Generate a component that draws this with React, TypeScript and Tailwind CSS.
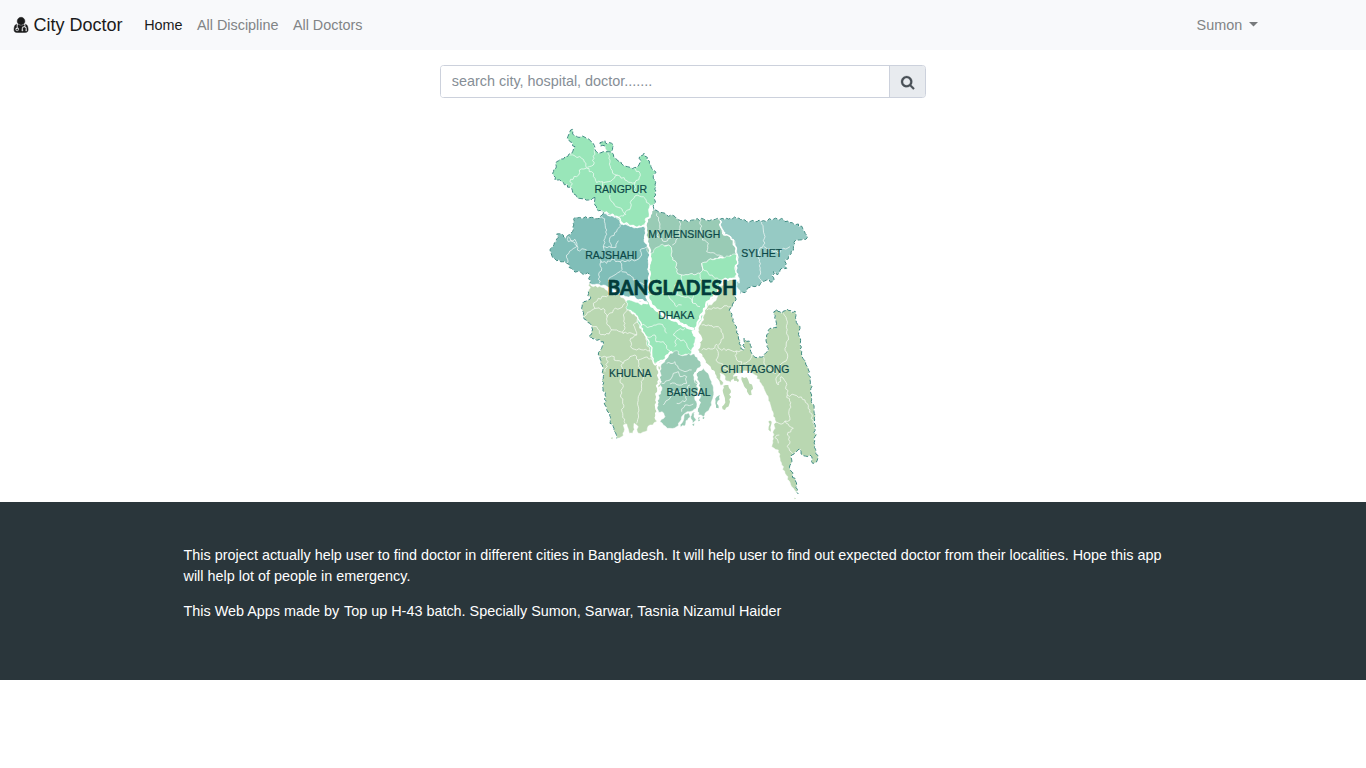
import React from "react";

type Shape = { at: [number, number]; fill?: string; pts: string };

const MINT = "#99e6b9";
const TEAL = "#80beb8";
const SAGE = "#99cbb5";
const AQUA = "#96cac4";
const OLIVE = "#b9d7b1";

const parse = (at: [number, number], pts: string) =>
  pts.split(" ").map((p) => {
    const [x, y] = p.split(",").map(Number);
    return [x + at[0], y + at[1]] as [number, number];
  });

const noise = (a: number, b: number) => {
  const s = Math.sin(a * 12.9898 + b * 78.233) * 43758.5453;
  return (s - Math.floor(s)) * 2 - 1;
};

// Adds small deterministic bends between points so that borders look surveyed.
const rough = (at: [number, number], pts: string, closed: boolean) => {
  const p = parse(at, pts);
  let d = `M${p[0][0]} ${p[0][1]}`;
  const n = closed ? p.length : p.length - 1;
  for (let i = 0; i < n; i++) {
    const a = p[i];
    const b = p[(i + 1) % p.length];
    // The bends are computed from the same end in both directions.
    const flip = a[0] > b[0] || (a[0] === b[0] && a[1] > b[1]);
    const [s, e] = flip ? [b, a] : [a, b];
    const dx = e[0] - s[0];
    const dy = e[1] - s[1];
    const len = Math.hypot(dx, dy);
    const steps = Math.max(1, Math.round(len / 6.5));
    const mid: string[] = [];
    for (let k = 1; k < steps; k++) {
      const t = k / steps;
      const o = noise(s[0] + k * 7, s[1] + k * 3) * 4;
      mid.push(`L${(s[0] + dx * t - (dy / len) * o).toFixed(1)} ${(s[1] + dy * t + (dx / len) * o).toFixed(1)}`);
    }
    if (flip) mid.reverse();
    d += mid.join("") + `L${b[0]} ${b[1]}`;
  }
  return closed ? d + "Z" : d;
};

const land: Shape[] = [
  { at: [480, 525], fill: OLIVE, pts: "110,-50 105,5 105,20 90,40 95,65 105,90 115,125 122,160 131,165 132,130 150,145 155,175 165,187 190,185 205,160 198,135 200,120 210,100 230,98 228,75 222,50 230,42 245,55 262,42 275,52 285,48 288,75 300,100 298,125 300,150 308,190 325,225 330,255 335,300 342,350 345,400 345,450 352,495 338,505 330,480 310,482 300,462 275,480 270,510 278,540 290,570 295,597 275,575 255,535 240,490 235,465 215,455 218,425 225,400 225,375 215,345 205,310 190,275 165,240 140,228 122,235 110,232 92,262 80,258 72,240 60,235 68,270 45,262 30,235 10,195 0,180 -15,150 -8,120 -5,100 5,80 15,55 20,40 50,10 70,-47" },
  { at: [90, 480], fill: OLIVE, pts: "60,10 70,20 95,22 120,42 150,45 168,65 172,90 200,105 205,130 225,165 230,190 240,210 245,235 258,250 270,260 268,290 272,310 262,340 258,370 258,400 260,425 240,435 225,455 205,460 200,435 192,430 188,460 178,460 170,432 160,435 162,455 155,470 140,475 130,440 120,430 120,400 105,375 105,345 98,320 100,290 98,260 85,225 95,205 100,185 75,175 58,172 68,150 60,130 40,110 35,85 42,65 60,58 55,35" },
  { at: [0, 240], fill: TEAL, pts: "105,52 125,55 155,52 180,55 190,40 205,42 230,50 240,68 262,76 290,82 312,80 316,98 312,118 325,140 330,165 325,190 330,215 328,240 320,260 318,285 325,305 300,305 280,290 262,290 230,275 205,262 190,255 150,250 148,222 125,220 100,210 80,190 50,182 35,165 30,148 42,135 48,125 55,112 50,102 65,102 75,115 85,105 98,95 102,75" },
  { at: [300, 240], fill: AQUA, pts: "240,58 260,55 290,55 320,65 345,65 370,62 400,58 430,58 450,68 475,72 490,90 502,112 490,118 465,122 460,145 448,165 435,185 440,205 420,210 412,225 400,215 398,245 380,240 362,250 345,260 330,262 315,278 300,280 290,260 298,235 285,215 292,185 290,150 282,120 255,105 245,85" },
  { at: [300, 240], fill: SAGE, pts: "40,30 55,35 80,45 105,50 130,62 160,60 190,57 220,60 240,60 245,80 250,100 270,108 285,125 287,145 290,165 260,170 225,175 205,180 185,190 188,205 180,220 150,222 125,225 110,215 110,190 98,180 95,150 85,135 65,135 45,155 35,170 20,150 22,110 15,85 20,60" },
  { at: [0, 0], fill: MINT, pts: "385,375 395,390 398,420 410,430 410,455 425,465 450,462 480,460 488,445 485,430 505,420 560,408 590,405 592,425 585,450 590,475 570,478 550,478 545,500 530,520 510,540 498,560 490,575 480,605 465,625 460,640 465,660 455,690 450,705 430,705 410,700 395,695 375,708 370,720 350,728 343,730 335,715 330,690 320,670 315,645 295,610 290,585 260,568 258,545 275,542 305,555 320,548 325,525 318,505 328,480 326,450 335,420 333,400 345,385 362,375" },
  { at: [0, 0], fill: MINT, pts: "92,30 98,28 98,42 120,52 135,52 155,65 165,90 175,100 190,95 205,95 218,100 225,115 245,132 270,142 292,142 300,128 300,108 312,100 322,112 328,130 335,145 348,158 340,175 345,195 347,225 340,260 330,255 328,290 315,300 315,318 285,320 260,312 240,305 230,288 205,280 175,272 165,255 165,232 145,240 120,235 100,222 95,205 65,185 45,180 38,160 48,145 50,125 75,110 95,100 105,80 90,65 82,55" },
  { at: [0, 0], fill: MINT, pts: "180,68 195,62 202,72 215,70 218,82 212,98 200,92 195,78 182,78" },
  { at: [90, 480], fill: SAGE, pts: "320,212 330,225 350,225 375,222 395,240 398,255 380,270 370,285 380,310 385,330 375,360 380,385 360,395 345,400 330,425 320,440 300,445 280,435 270,425 285,410 276,395 265,397 262,370 265,345 275,330 270,300 272,260 285,240 300,220" },
  { at: [300, 510], fill: SAGE, pts: "190,235 205,250 215,275 220,300 215,345 200,365 190,380 175,375 172,350 180,325 178,300 165,270 175,245" },
  { at: [300, 510], fill: SAGE, pts: "132,378 145,368 151,382 138,392 134,408 122,412" },
  { at: [300, 510], fill: SAGE, pts: "156,370 166,366 163,382 169,390 158,400 153,386" },
];

const islands: Shape[] = [
  { at: [480, 525], fill: OLIVE, pts: "70,272 85,270 92,285 90,320 75,345 68,343 75,315" },
  { at: [480, 525], fill: OLIVE, pts: "125,245 140,247 158,275 155,300 144,295 132,273" },
  { at: [480, 525], fill: OLIVE, pts: "100,245 112,243 114,262 103,258" },
  { at: [480, 525], fill: SAGE, pts: "50,305 60,300 53,318 56,340 48,338" },
  { at: [480, 525], fill: OLIVE, pts: "205,380 215,380 212,410 206,395" },
  { at: [300, 510], fill: SAGE, pts: "174,383 181,382 180,392 174,394" },
  { at: [300, 510], fill: SAGE, pts: "188,382 193,381 192,387 188,386" },
  { at: [300, 510], fill: SAGE, pts: "156,404 163,400 162,408" },
  { at: [480, 525], fill: OLIVE, pts: "283,608 288,610 284,613" },
  { at: [90, 480], fill: OLIVE, pts: "122,474 128,472 127,478" },
];

const districts: Shape[] = [
  { at: [0, 0], pts: "155,65 163,90 162,115 160,135 142,142" },
  { at: [0, 0], pts: "80,108 105,108 125,115 138,130 140,145 155,155 165,175 170,188 188,185 190,205" },
  { at: [0, 0], pts: "138,145 118,150 110,170 92,178 95,205" },
  { at: [0, 0], pts: "203,98 210,120 212,145 218,160 240,168 255,180 285,188 298,172 300,160 280,145" },
  { at: [0, 0], pts: "190,188 205,185 218,178 232,165" },
  { at: [0, 0], pts: "210,225 215,245 235,262 252,278 258,285" },
  { at: [0, 0], pts: "230,288 250,288 262,270 272,262 275,240 285,228 298,228 315,235 330,255" },
  { at: [0, 0], pts: "285,188 282,208 300,220" },
  { at: [0, 240], pts: "82,105 85,125 105,118 110,140 95,150 80,165 82,190" },
  { at: [0, 240], pts: "85,110 105,128 112,150 140,150" },
  { at: [0, 240], pts: "186,45 195,70 200,90 195,115 190,140" },
  { at: [0, 240], pts: "240,72 230,95 215,108 208,125 213,142 190,140 193,152" },
  { at: [0, 240], pts: "213,142 228,142 235,122" },
  { at: [0, 240], pts: "180,178 185,205 176,225 178,250" },
  { at: [0, 240], pts: "180,185 200,190 215,178 240,185 262,182 290,180 305,165 300,150 325,138" },
  { at: [0, 240], pts: "240,185 245,200 240,215 215,230 205,245" },
  { at: [0, 240], pts: "245,215 270,225 280,240 300,248 322,255" },
  { at: [300, 240], pts: "50,40 55,60 60,85 50,105 75,125 85,115 110,112" },
  { at: [300, 240], pts: "118,60 120,85 118,100 108,120 97,135" },
  { at: [300, 240], pts: "183,60 182,90 187,120 205,130 200,155 225,160 250,170" },
  { at: [300, 240], pts: "365,65 370,90 375,110 370,135 355,155 358,185 360,210 358,235 365,248" },
  { at: [300, 240], pts: "372,140 395,150 420,158 430,145 450,140" },
  { at: [300, 240], pts: "185,190 188,205 205,220 225,235 250,238" },
  { at: [300, 240], pts: "125,225 125,245 105,255 110,285 130,290 150,295 160,310 180,320" },
  { at: [300, 240], pts: "30,285 60,280 85,285 95,300 110,320 125,315" },
  { at: [300, 240], pts: "180,220 185,240 175,265 160,290 158,310" },
  { at: [90, 480], pts: "215,135 240,140 270,132 285,145 290,160" },
  { at: [90, 480], pts: "230,170 255,165 258,185 280,185 290,205 300,212" },
  { at: [90, 480], pts: "315,200 322,175 310,165 325,150 345,145" },
  { at: [90, 480], pts: "322,175 345,185 355,205 370,210" },
  { at: [90, 480], pts: "40,115 60,95 75,85 70,70 85,55 110,50 118,38" },
  { at: [90, 480], pts: "75,85 105,90 112,110 110,130 125,150" },
  { at: [90, 480], pts: "110,110 130,90 150,85 165,70" },
  { at: [90, 480], pts: "62,140 80,140 88,160 105,165 120,155 140,150 160,160 178,158 200,165 190,135 205,125" },
  { at: [90, 480], pts: "160,160 165,130 160,105 172,90" },
  { at: [90, 480], pts: "200,165 182,175 182,200 200,210 220,210 240,212" },
  { at: [90, 480], pts: "88,228 110,232 125,228 140,242 160,250 180,230 195,225 205,240 225,232 248,240" },
  { at: [90, 480], pts: "110,232 112,260 105,275" },
  { at: [90, 480], pts: "158,250 155,275 150,300 160,320 152,345 158,370 158,400 165,430" },
  { at: [90, 480], pts: "205,240 210,265 220,285 215,325 205,350 205,380 200,430" },
  { at: [90, 480], pts: "290,250 315,245 325,265 345,275 365,270" },
  { at: [90, 480], pts: "275,310 300,300 310,280 325,275 330,290 350,290 350,310 335,315 300,312" },
  { at: [90, 480], pts: "320,370 345,365 350,345 340,330 360,315" },
  { at: [90, 480], pts: "280,375 300,355 310,335 335,332" },
  { at: [90, 480], pts: "335,395 345,375 370,372" },
  { at: [480, 525], pts: "20,45 40,38 60,42 80,32 92,35" },
  { at: [480, 525], pts: "5,90 25,90 40,97 55,95 68,115 70,130 55,150" },
  { at: [480, 525], pts: "5,165 25,160 45,158 50,148 60,162 90,165 110,168 128,165" },
  { at: [480, 525], pts: "48,160 55,175 48,195 62,205 75,220 90,235" },
  { at: [480, 525], pts: "108,168 110,195 125,200 122,225" },
  { at: [480, 525], pts: "155,178 150,195 130,205" },
  { at: [480, 525], pts: "250,55 262,80 260,110 265,135 255,160 262,190 245,205 240,225 230,245 235,270 243,245 258,262 262,300" },
  { at: [480, 525], pts: "190,185 198,215 228,235" },
  { at: [480, 525], pts: "262,300 290,302 315,315 330,345 342,395" },
  { at: [480, 525], pts: "262,300 270,330 270,375 255,378 250,385 225,382" },
  { at: [480, 525], pts: "255,378 280,400 262,420 270,440 262,455 280,478" },
  { at: [480, 525], pts: "238,420 225,428 235,445" },
];

const rivers: { w: number; s: Shape }[] = [
  { w: 9, s: { at: [0, 0], pts: "318,522 335,558 360,580 390,595 430,617 462,628" } },
  { w: 16, s: { at: [0, 0], pts: "462,630 476,650 474,672 466,692 480,715 500,740 518,765 530,795 532,825" } },
  { w: 6, s: { at: [0, 0], pts: "590,475 550,480 530,520 498,555 480,590 465,625" } },
  { w: 6, s: { at: [0, 0], pts: "338,255 330,285 318,310 316,345 328,385 328,480 322,530" } },
  { w: 6, s: { at: [0, 0], pts: "268,530 300,540 325,550" } },
  { w: 4, s: { at: [0, 0], pts: "268,570 292,590 315,645 335,690 345,735" } },
  { w: 6, s: { at: [0, 0], pts: "352,725 358,760 350,835 350,900" } },
  { w: 5, s: { at: [0, 0], pts: "345,735 370,722 395,694" } },
  { w: 6, s: { at: [0, 0], pts: "492,740 465,760 478,810 475,860 462,890" } },
  { w: 4, s: { at: [0, 0], pts: "540,300 548,340 580,360 592,405 588,450 597,490" } },
  { w: 4, s: { at: [0, 0], pts: "200,282 230,290 245,308 285,320 316,318" } },
];

const borders: Shape[] = [
  { at: [0, 0], pts: "165,232 145,240 120,235 100,222 95,205 65,185 45,180 38,160 48,145 50,125 75,110 95,100 105,80 90,65 82,55 92,30 98,28 98,42 120,52 135,52 155,65 165,90 175,100 190,95 205,95 218,100 225,115 245,132 270,142 292,142 300,128 300,108 312,100 322,112 328,130 335,145 348,158 340,175 345,195 347,225 340,260 340,270 355,275 380,285 405,290 430,302 460,300 490,297 520,300 540,298 560,295 590,295 620,305 645,305 670,302 700,298 730,298 750,308 775,312 790,330 802,352 790,358 765,362 760,385 748,405 735,425 740,445 720,450 712,465 700,455 698,485 680,480 662,490 645,500 630,502 615,518 600,520" },
  { at: [0, 0], pts: "195,78 182,78 180,68 195,62 202,72 215,70 218,82 212,98" },
  { at: [0, 0], pts: "165,232 165,255 175,272 192,280" },
  { at: [0, 240], pts: "190,40 180,55 155,52 125,55 105,52 102,75 98,95 85,105 75,115 65,102 50,102 55,112 48,125 42,135 30,148 35,165 50,182 80,190 100,210 125,220 148,222 150,250" },
  { at: [90, 480], pts: "55,35 60,58 42,65 35,85 40,110 60,130 68,150 58,172 75,175 100,185 95,205 85,225 98,260 100,290 98,320 105,345 105,375 120,400 120,430 130,440 140,475" },
  { at: [480, 525], pts: "105,5 105,20 90,40 95,65 105,90 115,125 122,160 131,165 132,130 150,145 155,175 165,187 190,185 205,160 198,135 200,120 210,100 230,98 228,75 222,50 230,42 245,55 262,42 275,52 285,48 288,75 300,100 298,125 300,150 308,190 325,225 330,255 335,300 342,350 345,400 345,450 352,495 338,505 330,480 310,482 300,462 275,480 270,510 278,540 290,570 295,597" },
];

const labels: [string, number, number, number][] = [
  ["RANGPUR", 594.5, 193, 52.5],
  ["RAJSHAHI", 585.2, 259, 52],
  ["MYMENSINGH", 648.3, 238, 72],
  ["SYLHET", 741.3, 257, 41],
  ["DHAKA", 658.2, 319, 36],
  ["KHULNA", 609, 377, 42.5],
  ["BARISAL", 666.5, 396, 44],
  ["CHITTAGONG", 720.7, 372.5, 68.7],
];

function BangladeshMap() {
  return (
    <svg className="block h-[376px] w-[274px]" viewBox="547 126 274 376" role="img" aria-label="Bangladesh">
      <g transform="translate(540 120) scale(0.33333)" strokeLinejoin="round" strokeLinecap="butt" fill="none">
        {land.map((s, i) => (
          <path key={i} d={rough(s.at, s.pts, true)} fill={s.fill} stroke="#fff" strokeWidth="1.5" />
        ))}
        {districts.map((s, i) => (
          <path key={i} d={rough(s.at, s.pts, false)} stroke="#fff" strokeOpacity="0.65" strokeWidth="3" />
        ))}
        {rivers.map((r, i) => (
          <path key={i} d={rough(r.s.at, r.s.pts, false)} stroke="#fff" strokeWidth={r.w} />
        ))}
        {islands.map((s, i) => (
          <path key={i} d={rough(s.at, s.pts, true)} fill={s.fill} />
        ))}
        {borders.map((s, i) => (
          <path key={i} d={rough(s.at, s.pts, false)} stroke="#3a8980" strokeWidth="3" strokeDasharray="14 6" />
        ))}
      </g>
      <g className="font-['Liberation_Sans',sans-serif]" fill="#0c4847" stroke="#0c4847" strokeWidth="0.2" fontSize="11">
        {labels.map(([t, x, y, w]) => (
          <text key={t} x={x} y={y} textLength={w} lengthAdjust="spacingAndGlyphs">
            {t}
          </text>
        ))}
      </g>
      <text
        className="font-['Lato',sans-serif] font-bold"
        x="607.6"
        y="295"
        fontSize="20.5"
        textLength="129.5"
        lengthAdjust="spacingAndGlyphs"
        fill="#023c3b"
        stroke="#023c3b"
        strokeWidth="0.7"
      >
        BANGLADESH
      </text>
    </svg>
  );
}

function DoctorIcon() {
  return (
    <svg
      className="mr-[5px] h-[18px] w-[14.14px] overflow-visible"
      viewBox="0 0 1408 1792"
      fill="currentColor"
      stroke="currentColor"
      strokeWidth="45"
    >
      <path d="M384 1344q0 26-19 45t-45 19-45-19-19-45 19-45 45-19 45 19 19 45zm1024 37q0 121-73 190t-194 69h-874q-121 0-194-69t-73-190q0-68 5.500-131t24-138 47.500-132.500 81-103 120-60.500q-22 52-22 120v203q-58 20-93 70t-35 111q0 80 56 136t136 56 136-56 56-136q0-61-35.500-111t-92.500-70v-203q0-62 25-93 132 104 295 104t295-104q25 31 25 93v64q-106 0-181 75t-75 181v89q-32 29-32 71 0 40 28 68t68 28 68-28 28-68q0-42-32-71v-89q0-52 38-90t90-38 90 38 38 90v89q-32 29-32 71 0 40 28 68t68 28 68-28 28-68q0-42-32-71v-89q0-68-34.500-127.500t-93.500-93.500q0-10 .5-42.500t0-48-2.500-41.500-7-47-13-40q68 15 120 60.500t81 103 47.500 132.500 24 138 5.500 131zm-320-869q0 159-112.500 271.500t-271.500 112.500-271.500-112.500-112.500-271.500 112.500-271.500 271.500-112.500 271.500 112.500 112.500 271.500z" />
    </svg>
  );
}

function SearchIcon() {
  return (
    <svg
      className="mt-[2px] h-[14.4px] w-[13.4px] overflow-visible"
      viewBox="0 0 1664 1792"
      fill="currentColor"
      stroke="currentColor"
      strokeWidth="30"
    >
      <path d="M1152 832q0-185-131.500-316.500t-316.500-131.500-316.500 131.500-131.500 316.500 131.500 316.500 316.500 131.500 316.500-131.500 131.500-316.500zm512 832q0 52-38 90t-90 38q-54 0-90-38l-343-342q-179 124-399 124-143 0-273.500-55.500t-225-150-150-225-55.500-273.500 55.500-273.500 150-225 225-150 273.500-55.500 273.500 55.500 225 150 150 225 55.500 273.500q0 220-124 399l343 343q37 37 37 90z" />
    </svg>
  );
}

export default function App() {
  return (
    <div className="h-screen overflow-hidden bg-white font-['Liberation_Sans',Arial,sans-serif] text-[14.4px] leading-[21.6px] text-[#212529]">
      <nav className="flex h-[50px] items-center bg-[#f8f9fb] pl-[14.4px] text-[#818486]">
        <a className="flex items-center text-[18px] leading-[27px] text-[#1a1b1b]">
          <DoctorIcon />
          City Doctor
        </a>
        <div className="ml-[21.6px] flex gap-[14.4px] pt-[2px]">
          <a className="text-[#1a1b1b]">Home</a>
          <a>All Discipline</a>
          <a>All Doctors</a>
        </div>
        <a className="mr-[107.6px] ml-auto flex items-center pt-[2px]">
          Sumon
          <svg className="-mt-[3px] ml-[7.2px] h-[4.5px] w-[9px]" viewBox="0 0 9 4.5" fill="#777a7c">
            <path d="M0 0h9L4.500 4.500z" />
          </svg>
        </a>
      </nav>

      <main className="flex flex-col items-center">
        <div className="mt-[15px] flex h-[33px] w-[486px] overflow-hidden rounded-[3.6px] border border-[#ccd1dc]">
          <input
            className="min-w-0 flex-1 bg-white pl-[10.8px] text-[14.4px] outline-none placeholder:text-[#868e96]"
            placeholder="search city, hospital, doctor......."
          />
          <button className="flex w-[36px] items-center justify-center border-l border-[#ccd1dc] bg-[#e8ebef] text-[#495057]">
            <SearchIcon />
          </button>
        </div>
        <div className="mt-[28px] pl-[2px]">
          <BangladeshMap />
        </div>
      </main>

      <footer className="h-[178px] bg-[#2a363b] pt-[42.6px] text-white">
        <div className="mx-auto w-[999px]">
          <p className="leading-[21.4px]">
            This project actually help user to find doctor in different cities in Bangladesh. It will help user to find
            out expected doctor from their localities. Hope this app will help lot of people in emergency.
          </p>
          <p className="mt-[13.2px]">
            This Web Apps made by <span className="ml-[0.8px]">Top up H-43 batch. Specially Sumon, Sarwar, Tasnia Nizamul Haider</span>
          </p>
        </div>
      </footer>
    </div>
  );
}
